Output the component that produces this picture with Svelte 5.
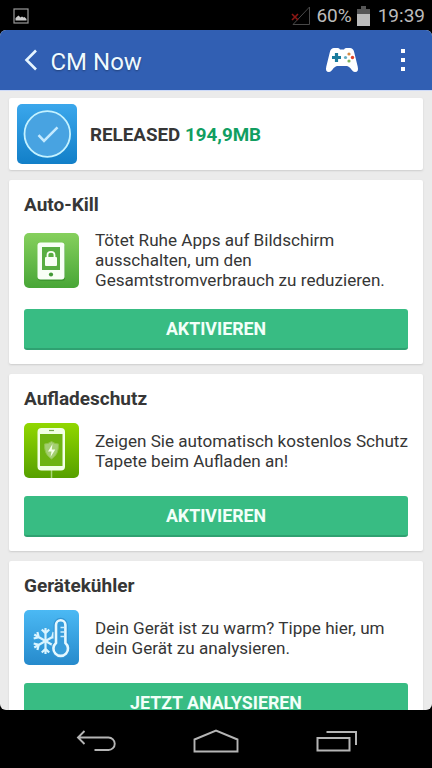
<script>
  const cards = [
    {
      title: "Auto-Kill",
      icon: "lock",
      lines: ["Tötet Ruhe Apps auf Bildschirm", "ausschalten, um den", "Gesamtstromverbrauch zu reduzieren."],
      action: "AKTIVIEREN"
    },
    {
      title: "Aufladeschutz",
      icon: "charge",
      lines: ["Zeigen Sie automatisch kostenlos Schutz", "Tapete beim Aufladen an!"],
      action: "AKTIVIEREN"
    },
    {
      title: "Gerätekühler",
      icon: "cooler",
      lines: ["Dein Gerät ist zu warm? Tippe hier, um", "dein Gerät zu analysieren."],
      action: "JETZT ANALYSIEREN"
    }
  ];
  const arms = [0, 60, 120, 180, 240, 300];
</script>

<div class="screen">
  <div class="status">
    <svg class="picture" width="16" height="16" viewBox="0 0 16 16">
      <rect x="1" y="1" width="14" height="14" fill="none" stroke="#999" stroke-width="1.2" />
      <path d="M2.5 12.5V10l3-2.5 2 2 1.500-1 1.500 1 1-.5 2 2v1.500z" fill="#ccc" />
    </svg>
    <svg class="signal" width="20" height="20" viewBox="0 0 20 20">
      <path d="M2 18.500L18.500 1v17.500z" fill="none" stroke="#484848" />
      <path d="M1 8l6 6M7 8l-6 6" stroke="#8c1714" stroke-width="1.600" />
    </svg>
    <span class="percent">60%</span>
    <svg class="battery" width="13" height="20" viewBox="0 0 13 20">
      <path d="M0 3h4V0h5v3h4v6H0z" fill="#555" />
      <path d="M0 8h13v12H0z" fill="#bbb" />
    </svg>
    <span class="time">19:39</span>
  </div>

  <div class="app">
    <header>
      <svg class="back" width="14" height="22" viewBox="0 0 14 22">
        <path d="M12 1.500L2.500 11l9.500 9.500" fill="none" stroke="#e6f5ff" stroke-width="2.600" />
      </svg>
      <h1>CM Now</h1>
      <svg class="gamepad" width="34" height="26" viewBox="0 0 34 26">
        <path d="M9 1h4q1.500 0 2 1.500h4q.5-1.500 2-1.500h4q3 0 4 3.500l3.700 15q1.300 5.500-2.700 5.500c-3 0-4.500-5.500-8-6H12c-3.500.5-5 6-8 6q-4 0-2.700-5.500L5 4.500Q6 1 9 1z" fill="#fff" />
        <path d="M11.500 6v9M7 10.500h9" stroke="#197b9c" stroke-width="3.200" />
        <circle cx="24" cy="7" r="1.600" fill="#d68a42" />
        <circle cx="20.500" cy="10.500" r="1.600" fill="#61adc4" />
        <circle cx="27.500" cy="10.500" r="1.700" fill="#e04328" />
        <circle cx="24" cy="14" r="1.600" fill="#7fb35d" />
      </svg>
      <svg class="more" width="6" height="24" viewBox="0 0 6 24">
        <path d="M1 1h4v4H1zM1 10h4v4H1zM1 19h4v4H1z" fill="#fff" />
      </svg>
    </header>

    <main>
      <section class="card summary">
        <svg width="60" height="60" viewBox="0 0 60 60">
          <defs>
            <linearGradient id="blue" x2="0" y2="1">
              <stop stop-color="#3ba7ec" />
              <stop offset="1" stop-color="#127fc8" />
            </linearGradient>
          </defs>
          <rect width="60" height="60" rx="5" fill="url(#blue)" />
          <circle cx="30.300" cy="30" r="22.800" fill="#48a3e1" stroke="#c4f2ff" stroke-width="1.800" />
          <path d="M21.500 31.200l5.500 5.600L40.500 23.300" fill="none" stroke="#c4eaff" stroke-width="2.600" />
        </svg>
        <p>RELEASED <b>194,9MB</b></p>
      </section>

      {#each cards as card}
        <section class="card">
          <h2>{card.title}</h2>
          <div class="info" class:tall={card.lines.length > 2}>
            {#if card.icon == "lock"}
              <svg width="55" height="55" viewBox="0 0 55 55">
                <defs>
                  <linearGradient id="green" x2="0" y2="1">
                    <stop stop-color="#86d05d" />
                    <stop offset="1" stop-color="#48a637" />
                  </linearGradient>
                </defs>
                <rect width="55" height="55" rx="5" fill="url(#green)" />
                <rect x="14" y="11" width="27" height="37" rx="3" fill="#3f9831" />
                <rect x="13.500" y="9.500" width="27" height="37" rx="3" fill="#f8fff6" />
                <rect x="18" y="14" width="18" height="23" fill="#58ae42" />
                <rect x="21" y="24" width="12" height="9" rx="1" fill="#f8fff6" />
                <path d="M23.500 25v-3q0-3.200 3.500-3.200t3.500 3.200v3" fill="none" stroke="#f8fff6" stroke-width="1.800" />
                <circle cx="27" cy="41.500" r="2.100" fill="#429936" />
              </svg>
            {:else if card.icon == "charge"}
              <svg width="55" height="55" viewBox="0 0 55 55">
                <defs>
                  <linearGradient id="lime" x2="0" y2="1">
                    <stop stop-color="#91d700" />
                    <stop offset="1" stop-color="#56a000" />
                  </linearGradient>
                </defs>
                <rect width="55" height="55" rx="5" fill="url(#lime)" />
                <path d="M27.500 47v8" stroke="#a8d574" stroke-width="1.500" />
                <rect x="13.500" y="5" width="27.500" height="42.500" rx="4" fill="#f2ffe6" />
                <rect x="16" y="11" width="22.500" height="32" fill="#6db312" />
                <path d="M25 7.500h5" stroke="#79a950" stroke-width="1.200" />
                <path d="M27.500 18.500q3.500 2.500 7 2.500c0 8-2 11.500-7 15-5-3.500-7-7-7-15q3.500 0 7-2.500z" fill="#a4cf73" stroke="#8fc447" />
                <path d="M28.500 21L24 28.500h3.500l-1 5.500 4.800-7.500h-3.500z" fill="#f6ffe9" />
              </svg>
            {:else}
              <svg width="55" height="55" viewBox="0 0 55 55">
                <defs>
                  <linearGradient id="sky" x2="0" y2="1">
                    <stop stop-color="#4bb9f4" />
                    <stop offset="1" stop-color="#268acc" />
                  </linearGradient>
                </defs>
                <rect width="55" height="55" rx="5" fill="url(#sky)" />
                <g fill="none" stroke="#d9f4ff" stroke-width="2.200">
                  {#each arms as angle}
                    <path d="M21.500 31V18M17.800 19.500l3.700 3.700 3.700-3.700" transform="rotate({angle} 21.500 31)" />
                  {/each}
                </g>
                <path d="M32 33V15a4.700 4.700 0 0 1 9.400 0V33a7.300 7.300 0 1 1-9.400 0z" fill="#389ddb" stroke="#3496d4" stroke-width="5" />
                <path d="M32 33V15a4.700 4.700 0 0 1 9.400 0V33a7.300 7.300 0 1 1-9.400 0z" fill="#389ddb" stroke="#e5f8ff" stroke-width="2.600" />
                <path d="M36.500 17.500h4M36.500 22h4M36.500 26.500h4" stroke="#cceeff" stroke-width="1.600" />
              </svg>
            {/if}
            <p>
              {#each card.lines as line}
                <span>{line}</span>
              {/each}
            </p>
          </div>
          <button>{card.action}</button>
        </section>
      {/each}
    </main>
  </div>

  <nav>
    <svg width="40" height="22" viewBox="0 0 40 22">
      <path d="M8.500 1L2 7.500l6.500 6.500M2 7.500h30.500a6 6 0 0 1 0 12.500H18.500" fill="none" stroke="#b5b5b5" stroke-width="1.900" />
    </svg>
    <svg width="46" height="24" viewBox="0 0 46 24">
      <path d="M1.500 22.500V10.500L23 1.500l21.500 9v12z" fill="none" stroke="#b5b5b5" stroke-width="1.900" />
    </svg>
    <svg width="42" height="22" viewBox="0 0 42 22">
      <path d="M1.500 8h32v12.500h-32zM10.500 2h29.500v13" fill="none" stroke="#b5b5b5" stroke-width="2" />
    </svg>
  </nav>
</div>

<style>
  .screen {
    width: 432px;
    height: 768px;
    display: flex;
    flex-direction: column;
    overflow: hidden;
    background: #000;
    color: #363636;
    font-family: Roboto, sans-serif;
  }
  svg {
    display: block;
    flex: none;
  }
  .status {
    height: 30px;
    flex: none;
    display: flex;
    align-items: center;
    box-sizing: border-box;
    padding: 1px 7px 0 13px;
    color: #bcbcbc;
    font-size: 19px;
    line-height: 30px;
  }
  .signal {
    margin: 0 5px 0 auto;
  }
  .battery {
    margin: 0 8px 0 5px;
  }
  .app {
    height: 680px;
    flex: none;
    overflow: hidden;
    border-radius: 6px;
    background: #ebebeb;
  }
  header {
    height: 60px;
    display: flex;
    align-items: center;
    box-sizing: border-box;
    padding: 0 26px 0 24px;
    background: #315fb3;
    color: #eefaff;
  }
  h1 {
    margin: 3px auto 0 12.5px;
    font-size: 24px;
    font-weight: 400;
    text-shadow: 0 1px 2px #0005;
  }
  .gamepad {
    margin-right: 41px;
  }
  main {
    padding: 7px 9px 0;
    border-top: 1px solid #cddaf8;
  }
  .card {
    box-sizing: border-box;
    margin-bottom: 10px;
    padding: 14px 15px;
    border-radius: 2px;
    background: #fff;
    box-shadow: 0 1px 2px #ccc;
  }
  .summary {
    height: 72px;
    display: flex;
    align-items: center;
    padding: 0 8px;
  }
  .summary p {
    margin: 2px 0 0 13px;
    font-size: 18.8px;
    font-weight: 700;
  }
  b {
    color: #119e61;
    font-weight: 700;
  }
  h2 {
    height: 22px;
    margin: 0 0 13px;
    font-size: 19px;
    line-height: 22px;
    font-weight: 700;
  }
  .info {
    height: 55px;
    display: flex;
    align-items: center;
    margin-bottom: 18px;
  }
  .tall {
    height: 62px;
  }
  .info p {
    margin: 0 0 0 16px;
    font-size: 17.1px;
    line-height: 20px;
    white-space: nowrap;
  }
  .info span {
    display: block;
  }
  button {
    display: block;
    width: 100%;
    height: 41px;
    padding: 0;
    border: 0;
    border-bottom: 2px solid #2fa171;
    border-radius: 3px;
    background: #38bc83;
    color: #f2fff9;
    font: 700 17.8px Roboto, sans-serif;
  }
  nav {
    height: 58px;
    flex: none;
    display: flex;
    align-items: center;
    justify-content: space-between;
    box-sizing: border-box;
    padding: 3px 74px 0 76px;
  }
</style>
